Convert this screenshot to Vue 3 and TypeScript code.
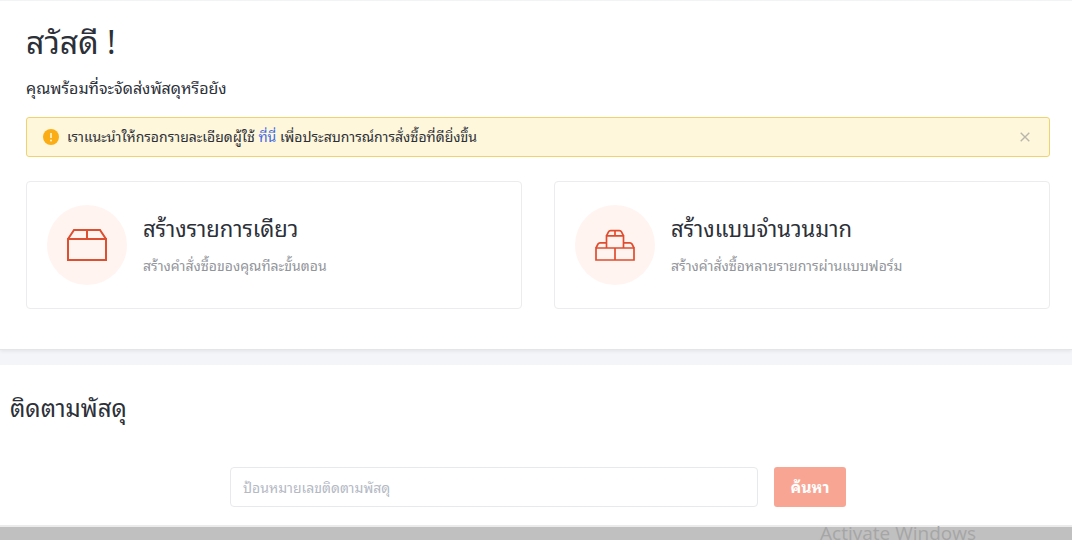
<script setup lang="ts">
import { ref } from 'vue'

interface OrderOption {
  id: 'single' | 'bulk'
  title: string
  description: string
}

const options: OrderOption[] = [
  { id: 'single', title: 'สร้างรายการเดียว', description: 'สร้างคำสั่งซื้อของคุณทีละขั้นตอน' },
  { id: 'bulk', title: 'สร้างแบบจำนวนมาก', description: 'สร้างคำสั่งซื้อหลายรายการผ่านแบบฟอร์ม' },
]

const noticeOpen = ref(true)
const trackingNumber = ref('')
</script>

<template>
  <div class="page">
    <main class="content">
      <section class="welcome">
        <h1>สวัสดี !</h1>
        <p class="lead">คุณพร้อมที่จะจัดส่งพัสดุหรือยัง</p>

        <div v-if="noticeOpen" class="notice" role="status">
          <svg class="notice-icon" viewBox="0 0 16 16" aria-hidden="true">
            <circle cx="8" cy="8" r="8" fill="#faad14" />
            <path d="M8 4v5" stroke="#fff6d9" stroke-width="1.6" />
            <circle cx="8" cy="11.4" r="1" fill="#fff6d9" />
          </svg>
          <p>เราแนะนำให้กรอกรายละเอียดผู้ใช้ <a href="#profile">ที่นี่</a> เพื่อประสบการณ์การสั่งซื้อที่ดียิ่งขึ้น</p>
          <button class="close" type="button" aria-label="ปิด" @click="noticeOpen = false">
            <svg viewBox="0 0 10 10" aria-hidden="true">
              <path d="M0.7 0.7l8.6 8.6M9.3 0.7L0.7 9.3" fill="none" stroke="#b9b7ab" stroke-width="1.4" />
            </svg>
          </button>
        </div>

        <div class="options">
          <a v-for="option in options" :key="option.id" class="option" :href="`#${option.id}`">
            <span class="badge">
              <svg v-if="option.id === 'single'" viewBox="0 0 42 34" aria-hidden="true">
                <path d="M2 11v21h38V11zM2 11l6-9h26l6 9M21 2v9" />
              </svg>
              <svg v-else class="stack" viewBox="0 0 42 34" aria-hidden="true">
                <path d="M2 20h19v12H2zM21 20h19v12H21z" />
                <path d="M2 20l2-4q.8-1.2 2-1.2h6.5M40 20l-2-4q-.8-1.2-2-1.2h-6.5" />
                <path d="M12.5 20V7.8h17V20M12.5 7.8l2-4q.6-1.2 2-1.2h9q1.4 0 2 1.2l2 4M21 2.6v5.2" />
              </svg>
            </span>
            <span class="option-text">
              <span class="option-title">{{ option.title }}</span>
              <span class="option-description">{{ option.description }}</span>
            </span>
          </a>
        </div>
      </section>

      <section class="tracking">
        <h2>ติดตามพัสดุ</h2>
        <form class="search" @submit.prevent>
          <input v-model="trackingNumber" type="text" aria-label="ป้อนหมายเลขติดตามพัสดุ" placeholder="ป้อนหมายเลขติดตามพัสดุ" />
          <button type="submit">ค้นหา</button>
        </form>
      </section>
    </main>
    <footer class="bottom-bar"><span>Activate Windows</span></footer>
  </div>
</template>

<style>
body {
  margin: 0;
  background: #f3f5f9;
}
</style>

<style scoped>
.page {
  display: flex;
  flex-direction: column;
  height: 100vh;
  overflow: hidden;
  color: #2c3038;
  font-family: "Noto Sans", "Noto Sans Thai Looped", Loma, "Open Sans", sans-serif;
}

.page * {
  box-sizing: border-box;
}

h1,
h2,
p {
  margin: 0;
  font-weight: 400;
}

.content {
  flex: none;
}

.welcome {
  padding: 20px 22px 40px 26px;
  background: #fff;
  border-top: 1px solid #f2f3f5;
  border-bottom: 1px solid #e4e5e7;
  box-shadow: 0 1px 4px rgba(0, 0, 0, 0.08);
}

h1 {
  font-size: 32px;
  line-height: 42px;
}

.lead {
  margin-top: 13px;
  font-size: 16px;
  line-height: 24px;
}

.notice {
  display: flex;
  align-items: center;
  gap: 8px;
  height: 40px;
  margin-top: 17px;
  padding: 0 16px;
  background: #fff7db;
  border: 1px solid #f0d36e;
  border-radius: 3px;
  font-size: 14px;
  line-height: 24px;
}

.notice p {
  flex: 1;
}

.notice a {
  color: #4169e8;
  text-decoration: none;
}

.notice-icon {
  width: 16px;
  height: 16px;
}

.close {
  display: flex;
  padding: 3px;
  background: none;
  border: 0;
  cursor: pointer;
}

.close svg {
  width: 10px;
  height: 10px;
}

.options {
  display: grid;
  grid-template-columns: 1fr 1fr;
  gap: 32px;
  margin-top: 24px;
}

.option {
  display: flex;
  align-items: center;
  gap: 16px;
  height: 128px;
  padding: 0 20px;
  border: 1px solid #ececee;
  border-radius: 4px;
  color: inherit;
  text-decoration: none;
}

.badge {
  display: grid;
  flex: none;
  place-items: center;
  width: 80px;
  height: 80px;
  border-radius: 50%;
  background: #fff4f0;
}

.badge svg {
  width: 42px;
  height: 34px;
  fill: none;
  stroke: #dc4f30;
  stroke-width: 2;
}

.badge .stack {
  stroke: #e04c2e;
  stroke-width: 1.7;
}

.option-text {
  display: flex;
  flex-direction: column;
  gap: 10px;
}

.option-title {
  font-size: 22px;
  line-height: 32px;
}

.option-description {
  color: #92959b;
  font-size: 14px;
  line-height: 24px;
}

.tracking {
  margin-top: 15px;
  padding: 23px 6px 18px 10px;
  background: #fff;
}

h2 {
  font-size: 24px;
  line-height: 40px;
}

.search {
  display: flex;
  gap: 16px;
  max-width: 616px;
  margin: 39px auto 0;
}

.search input {
  flex: 1;
  min-width: 0;
  height: 40px;
  padding: 0 12px;
  border: 1px solid #e8e9ec;
  border-radius: 4px;
  background: #fff;
  color: inherit;
  font: inherit;
  font-size: 14px;
}

.search input::placeholder {
  color: #b4b9c4;
  opacity: 1;
}

.search button {
  width: 72px;
  height: 40px;
  padding: 0 0 3px;
  border: 0;
  border-radius: 3px;
  background: #f8a594;
  color: #fff;
  font: inherit;
  font-size: 16px;
  font-weight: 700;
}

.bottom-bar {
  flex: 1;
  min-height: 0;
  padding-right: 96px;
  border-top: 2px solid #ebebeb;
  background: #c0c0c0;
  color: #a6a6a6;
  font-family: "Open Sans", sans-serif;
  font-size: 19px;
  line-height: 12px;
  text-align: right;
}
</style>
